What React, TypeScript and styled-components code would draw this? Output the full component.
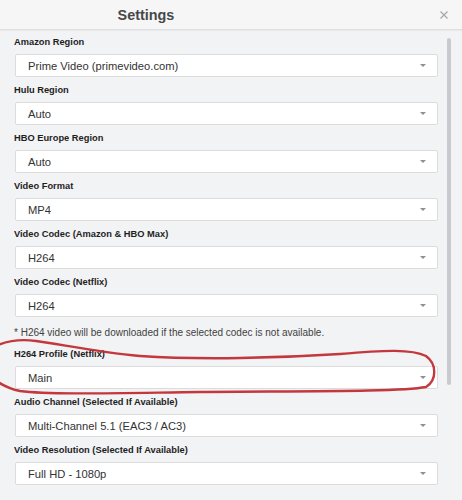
import React from "react";
import styled, { createGlobalStyle } from "styled-components";

const Global = createGlobalStyle`
  html, body { margin: 0; padding: 0; background: #f2f3f4; }
  body { font-family: "Liberation Sans", Arial, sans-serif; }
  * { box-sizing: border-box; }
`;

const Window = styled.div`
  position: relative;
  width: 462px;
  height: 500px;
  overflow: hidden;
  background: #f2f3f4;
  display: flex;
  flex-direction: column;
`;

const Header = styled.header`
  height: 30px;
  flex: none;
  display: grid;
  grid-template-columns: 292px 1fr auto;
  align-items: center;
  background: #f6f6f6;
  border-bottom: 1px solid #dedfe1;
  box-shadow: 0 1px 1px rgba(0, 0, 0, 0.03);
`;

const Title = styled.h1`
  margin: 0;
  text-align: center;
  font-size: 14.4px;
  font-weight: bold;
  color: #46474b;
  line-height: 30px;
`;

const Close = styled.button`
  grid-column: 3;
  border: 0;
  background: none;
  padding: 0;
  margin-right: 14px;
  width: 9px;
  height: 9px;
  display: flex;
  align-items: center;
  justify-content: center;
`;

const Body = styled.div`
  flex: 1;
  display: flex;
  padding: 5px 0 0 14px;
`;

const Form = styled.div`
  width: 424px;
  display: flex;
  flex-direction: column;
`;

const Group = styled.div`
  display: flex;
  flex-direction: column;
  margin-bottom: 6px;
`;

const Label = styled.label`
  font-size: 9.3px;
  font-weight: bold;
  line-height: 14px;
  color: #1e1e1e;
  margin-bottom: 5px;
`;

const Select = styled.div`
  margin-left: 1px;
  height: 23px;
  background: #fff;
  border: 1px solid #dcdcdc;
  border-radius: 2px;
  display: flex;
  align-items: center;
  justify-content: space-between;
  padding: 0 11px 0 12px;
  font-size: 11.2px;
  color: #333;
`;

const Arrow = styled.span`
  width: 0;
  height: 0;
  border-left: 3px solid transparent;
  border-right: 3px solid transparent;
  border-top: 3px solid #8f8f8f;
`;

const Note = styled.p`
  margin: 3px 0 7px 0;
  font-size: 10px;
  line-height: 14px;
  color: #3f3f3f;
`;

const ScrollTrack = styled.div`
  margin-left: 9px;
  width: 4px;
  padding-top: 3px;
`;

const ScrollThumb = styled.div`
  width: 4px;
  height: 347px;
  border-radius: 2px;
  background: #c9cacf;
`;

const Annotation = styled.svg`
  position: absolute;
  left: 0;
  top: 0;
  pointer-events: none;
`;

const fields: { label: string; value: string; note?: string }[] = [
  { label: "Amazon Region", value: "Prime Video (primevideo.com)" },
  { label: "Hulu Region", value: "Auto" },
  { label: "HBO Europe Region", value: "Auto" },
  { label: "Video Format", value: "MP4" },
  { label: "Video Codec (Amazon & HBO Max)", value: "H264" },
  {
    label: "Video Codec (Netflix)",
    value: "H264",
    note: "* H264 video will be downloaded if the selected codec is not available.",
  },
  { label: "H264 Profile (Netflix)", value: "Main" },
  { label: "Audio Channel (Selected If Available)", value: "Multi-Channel 5.1 (EAC3 / AC3)" },
  { label: "Video Resolution (Selected If Available)", value: "Full HD - 1080p" },
];

export default function App() {
  return (
    <>
      <Global />
      <Window>
        <Header>
          <Title>Settings</Title>
          <Close aria-label="Close">
            <svg width="8" height="8" viewBox="0 0 8 8">
              <path d="M0.5 0.5 L7.5 7.5 M7.5 0.5 L0.5 7.5" stroke="#a8a8a8" strokeWidth="1.3" />
            </svg>
          </Close>
        </Header>
        <Body>
          <Form>
            {fields.map((f) => (
              <React.Fragment key={f.label}>
                <Group>
                  <Label>{f.label}</Label>
                  <Select>
                    <span>{f.value}</span>
                    <Arrow />
                  </Select>
                </Group>
                {f.note && <Note>{f.note}</Note>}
              </React.Fragment>
            ))}
          </Form>
          <ScrollTrack>
            <ScrollThumb />
          </ScrollTrack>
        </Body>
        <Annotation width="462" height="500" viewBox="0 0 462 500">
          <path
            d="M -2 345 C 8 341, 22 339, 36 341 C 60 344, 95 352, 140 356 C 200 360, 280 358, 340 354 C 385 350, 412 349, 426 356 C 437 364, 437 380, 426 387 C 400 392, 300 391, 200 392 C 120 393, 50 395, 20 391 C 10 389, 4 386, -2 382"
            fill="none"
            stroke="#c0272d"
            strokeWidth="2.4"
            strokeLinecap="round"
            opacity="0.92"
          />
        </Annotation>
      </Window>
    </>
  );
}
